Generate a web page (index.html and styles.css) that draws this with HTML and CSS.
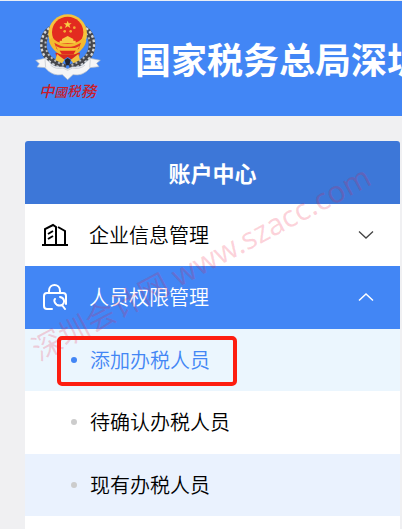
FILE: index.html
```html
<!DOCTYPE html>
<html lang="zh-CN">
<head>
<meta charset="utf-8">
<meta name="viewport" content="width=device-width, initial-scale=1">
<title>账户中心</title>
<link rel="stylesheet" href="styles.css">
</head>
<body>
<header class="site-header">
  <svg class="logo" viewBox="30 39 198 267" role="img" aria-label="中国税务">
    <g fill="none">
      <path d="M78 87C48 108 46 158 80 183Q98 197 122 204M178 87C208 108 210 158 176 183Q158 197 134 204" stroke="#45464b" stroke-width="20"/>
      <path d="M73 84C41 108 40 160 75 186Q94 201 122 208M183 84C215 108 216 160 181 186Q162 201 134 208" stroke="#d3d6da" stroke-width="7" stroke-dasharray="8 6"/>
      <path d="M82 92C55 112 53 154 85 178Q102 190 122 197M174 92C201 112 203 154 171 178Q154 190 134 197" stroke="#b4b8be" stroke-width="6" stroke-dasharray="6 7"/>
    </g>
    <path d="M91 158H165L160 178H138L128 171L118 178H96Z" fill="#d92a1d"/>
    <circle cx="128" cy="101" r="58" fill="#f6c33b"/>
    <circle cx="128" cy="97" r="47" fill="#e32b20"/>
    <path d="M82 112C92 126 110 132 128 132S164 126 174 112L184 122C179 142 164 157 150 163H106C92 157 77 142 72 122Z" fill="#f3b92f"/>
    <path d="M88 128Q128 153 168 128L161 147Q128 164 95 147Z" fill="#e33822"/>
    <path d="M111 117L128 108L145 117V122H152V130H104V122H111Z" fill="#f8c942"/>
    <path d="M92 138L106 144H150L164 138L157 150Q128 162 99 150Z" fill="#f5bd32"/>
    <path d="M104 152H152L146 162H110Z" fill="#e02a1e"/>
    <path d="M128 62L131 70H140L133 75L136 84L128 79L120 84L123 75L116 70H125Z" fill="#f9cf45"/>
    <g fill="#f4ad36"><circle cx="108" cy="83" r="4"/><circle cx="148" cy="83" r="4"/><circle cx="119" cy="94" r="4"/><circle cx="137" cy="94" r="4"/></g>
    <path d="M96 162L119 180L111 190L91 180ZM160 162L137 180L145 190L165 180Z" fill="#f1c344"/>
    <path d="M119 180L128 174L137 180L133 196H123Z" fill="#202431"/>
    <path d="M32 181L60 175L73 186Q88 204 114 200L128 207L142 200Q168 204 183 186L196 175L226 181L215 190L222 200L196 203Q174 230 144 224L128 239L112 224Q82 230 60 203L36 201L43 191Z" fill="#f5f5f6" stroke="#a8b3c5" stroke-width="2"/>
    <path d="M60 178L62 203M196 178L194 203M76 195Q91 209 114 204L128 211L142 204Q165 209 180 195" fill="none" stroke="#d0d3d9" stroke-width="3"/>
    <g class="logo-name"><text x="42" y="290" font-size="46">中</text><text x="88" y="291" font-size="38">國</text><text x="127" y="289" font-size="40">税</text><text x="167" y="290" font-size="46">務</text></g>
  </svg>
  <h1 class="site-title">国家税务总局深圳</h1>
</header>
<main class="page">
  <nav class="menu" aria-labelledby="menu-title">
    <h2 class="menu-title" id="menu-title">账户中心</h2>
    <button class="menu-row" type="button" aria-expanded="false">
      <svg class="icon" viewBox="0 0 26 24" fill="none" stroke="currentColor" stroke-width="2" aria-hidden="true">
        <path d="M0 22H26M3 22V6L11 2L14 4V22M16 4L23 8V22M6 11L11 8M6 16L11 13"/>
      </svg>
      <span class="menu-label">企业信息管理</span>
      <svg class="chevron" viewBox="0 0 16 10" fill="none" stroke="#444" stroke-width="1.3" aria-hidden="true"><path d="M1 1.5L8 8L15 1.5"/></svg>
    </button>
    <button class="menu-row menu-row-open" type="button" aria-expanded="true" aria-controls="staff-menu">
      <svg class="icon" viewBox="0 0 26 26" fill="none" stroke="currentColor" stroke-width="2" stroke-linecap="round" aria-hidden="true">
        <path d="M7 9V7C7 -1 18 -1 18 7V9M10 25H5Q2 25 2 22V12Q2 9 5 9H21Q24 9 24 12V20M14 20C12 18 12 16 13 15M18 13C23 14 23 19 20 21Q18 22 15 21M20 21L23 25"/>
      </svg>
      <span class="menu-label">人员权限管理</span>
      <svg class="chevron" viewBox="0 0 16 10" fill="none" stroke="currentColor" stroke-width="1.5" aria-hidden="true"><path d="M1 8.5L8 2L15 8.5"/></svg>
    </button>
    <ul class="submenu" id="staff-menu">
      <li class="submenu-item current"><a class="submenu-link" href="#add" aria-current="page">添加办税人员</a></li>
      <li class="submenu-item"><a class="submenu-link" href="#pending">待确认办税人员</a></li>
      <li class="submenu-item hovered"><a class="submenu-link" href="#existing">现有办税人员</a></li>
    </ul>
    <div class="watermark" aria-hidden="true">深圳会计网 www.szacc.com</div>
  </nav>
</main>
</body>
</html>
```
FILE: styles.css
```css
*,
*::before,
*::after {
  box-sizing: border-box;
}

body {
  display: flex;
  flex-direction: column;
  min-height: 100vh;
  margin: 0;
  overflow-x: hidden;
  background: #f0f0f2;
  color: #000;
  font-family: "Noto Sans CJK SC", sans-serif;
  font-size: 20px;
}

.site-header {
  display: flex;
  align-items: center;
  gap: 34px;
  padding: 12px 0 14px 35px;
  border-top: 1px solid #e8edf5;
  overflow: hidden;
  background: #4286f5;
}

.logo {
  flex: none;
  width: 66px;
  height: 89px;
  overflow: visible;
}

.logo-name {
  fill: #c91d2b;
  font-family: "Noto Sans CJK TC", sans-serif;
  font-style: italic;
  font-weight: 500;
}

.site-title {
  margin: 0;
  color: #fff;
  font-size: 36px;
  line-height: 60px;
  font-weight: 700;
  white-space: nowrap;
}

.page {
  display: flex;
  flex: 1;
  padding: 25px 2px 0 25px;
}

.menu {
  position: relative;
  flex: 1;
  border-radius: 3px 3px 0 0;
  background: #fff;
}

.menu-title {
  margin: 0;
  border-radius: 3px 3px 0 0;
  background: #3d77d8;
  color: #fff;
  font-size: 22px;
  line-height: 63px;
  text-align: center;
}

.menu-row {
  display: flex;
  align-items: center;
  width: 100%;
  padding: 0 26px 0 17px;
  border: 0;
  background: #fff;
  color: #000;
  font: inherit;
  font-weight: 350;
  line-height: 62px;
  text-align: left;
}

.menu-row-open {
  border-bottom: 1px solid #4286f5;
  background: #4286f5;
  color: #fff;
}

.icon {
  flex: none;
  width: 26px;
  height: 26px;
  margin-right: 21px;
}

.menu-label {
  flex: 1;
}

.chevron {
  width: 16px;
  height: 10px;
}

.submenu {
  margin: 0;
  padding: 0;
  list-style: none;
  font-weight: 350;
}

.submenu-item {
  position: relative;
  line-height: 62px;
}

.submenu-item:nth-child(even) {
  border-bottom: 1px solid #fff;
}

.submenu-link {
  display: flex;
  align-items: center;
  gap: 13px;
  padding-left: 46px;
  color: inherit;
  text-decoration: none;
}

.submenu-link::before {
  width: 6px;
  height: 6px;
  border-radius: 50%;
  background: #ccc;
  content: "";
}

.current {
  background: #ebf6fe;
  color: #4286f5;
}

.current .submenu-link::before {
  background: #4286f5;
}

.current::after {
  position: absolute;
  top: 7px;
  left: 32px;
  width: 180px;
  height: 50px;
  border: 4px solid #fd1d10;
  border-radius: 5px;
  content: "";
}

.hovered {
  background: #eaf2fe;
}

.watermark {
  position: absolute;
  top: 102px;
  left: -13px;
  color: rgba(240, 20, 60, 0.19);
  font-family: "Noto Sans", "Noto Sans CJK SC", sans-serif;
  font-size: 30px;
  line-height: 40px;
  white-space: nowrap;
  transform: rotate(-28deg);
  pointer-events: none;
}
```
